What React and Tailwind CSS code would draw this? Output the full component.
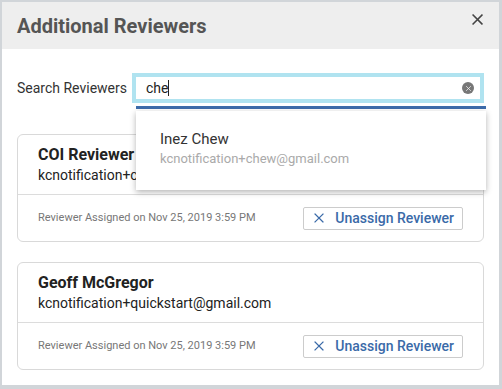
import React from "react";

const XIcon = ({ className, width = 1.4 }) => (
  <svg viewBox="0 0 10 10" className={className} fill="none" stroke="currentColor" strokeWidth={width} strokeLinecap="square">
    <path d="M1 1 L9 9 M9 1 L1 9" />
  </svg>
);

const ReviewerCard = ({ name, email, assigned }) => (
  <div className="border border-[#d9d9d9] rounded-[6px] bg-white">
    <div className="h-[59px] px-[20px] pt-[10px]">
      <div className="text-[16px] font-bold text-[#222] leading-[20px]">{name}</div>
      <div className="text-[14px] text-[#222] leading-[20px]">{email}</div>
    </div>
    <div className="border-t border-[#dcdcdc] flex items-center justify-between pl-[20px] pr-[20px] h-[47px]">
      <span className="text-[11px] text-[#777]">Reviewer Assigned on {assigned}</span>
      <button className="flex items-center h-[23px] pl-[10px] pr-[8px] border border-[#ccc] rounded-[2px] bg-white text-[#3a6aa8] text-[14px] font-medium">
        <XIcon className="w-[10px] h-[10px] mr-[11px]" width={1.2} />
        Unassign Reviewer
      </button>
    </div>
  </div>
);

export default function App() {
  return (
    <div
      className="w-[502px] h-[389px] bg-[#d1d5d9] pt-[2px] pl-[2px] pr-[3px] pb-[4px]"
      style={{ fontFamily: "Roboto, 'Liberation Sans', sans-serif" }}
    >
      <div className="w-full h-full bg-white flex flex-col">
        {/* Header */}
        <div className="h-[47px] shrink-0 bg-[#eeeeee] flex items-center justify-between pl-[15px] pr-[16px]">
          <h1 className="text-[20px] font-bold text-[#555]">Additional Reviewers</h1>
          <XIcon className="w-[11px] h-[11px] text-[#444] -mt-[12px]" />
        </div>

        {/* Body */}
        <div className="relative px-[15px] pt-[24px]">
          <div className="flex items-center">
            <label className="text-[14px] text-[#333] w-[115px]">Search Reviewers</label>
            <div className="flex-1 h-[30px] border-[4px] border-[#b0e3f0] bg-white flex items-center pl-[10px] pr-[6px]">
              <span className="text-[14px] text-[#222]">che</span>
              <span className="w-px h-[16px] bg-[#222]" />
              <div className="ml-auto w-[12px] h-[12px] rounded-full bg-[#777] flex items-center justify-center">
                <XIcon className="w-[5px] h-[5px] text-white" />
              </div>
            </div>
          </div>

          <div className="flex flex-col gap-[20px] mt-[31px]">
            <ReviewerCard
              name="COI Reviewer"
              email="kcnotification+coireviewer@gmail.com"
              assigned="Nov 25, 2019 3:59 PM"
            />
            <ReviewerCard
              name="Geoff McGregor"
              email="kcnotification+quickstart@gmail.com"
              assigned="Nov 25, 2019 3:59 PM"
            />
          </div>

          {/* Dropdown */}
          <div className="absolute left-[134px] top-[57px] w-[350px]">
            <div className="h-[3px] bg-[#3d6cab]" />
            <div className="mt-[2px] bg-white shadow-[0_2px_6px_rgba(0,0,0,0.3)] h-[79px] pl-[24px] pt-[18px]">
              <div className="text-[15px] text-[#333] leading-[20px]">Inez Chew</div>
              <div className="text-[13px] text-[#aaa] leading-[20px]">kcnotification+chew@gmail.com</div>
            </div>
          </div>
        </div>
      </div>
    </div>
  );
}
